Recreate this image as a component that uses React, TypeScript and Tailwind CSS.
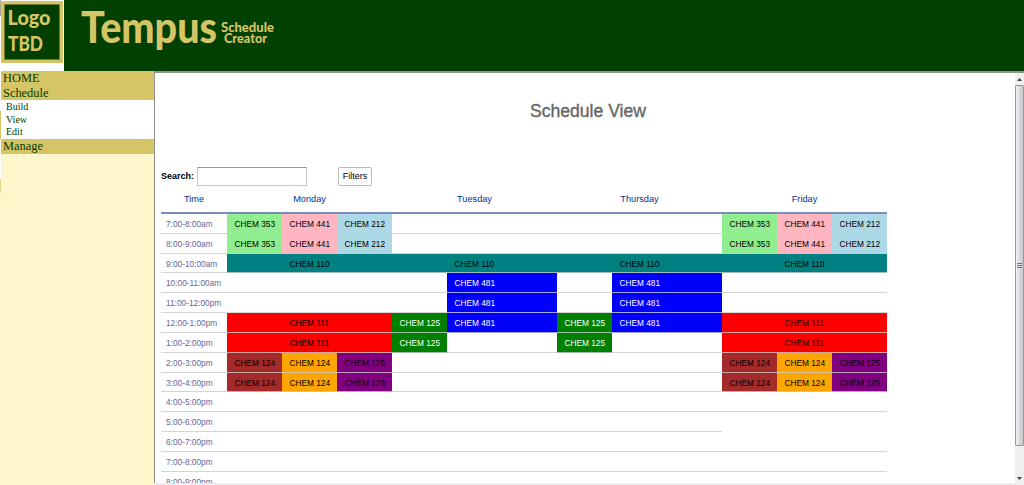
type Cell = { span: number; text?: string; tone?: string; pos?: string; noLine?: boolean };

const GREEN = 'bg-[#90ee90] text-black';
const PINK = 'bg-[#ffb6c1] text-black';
const LIGHT = 'bg-[#add8e6] text-black';
const TEAL = 'bg-[#008080] text-black';
const BLUE = 'bg-[#0000ff] text-white';
const FOREST = 'bg-[#008000] text-white';
const RED = 'bg-[#ff0000] text-black';
const BROWN = 'bg-[#a52a2a] text-black';
const ORANGE = 'bg-[#ffa500] text-black';
const PURPLE = 'bg-[#800080] text-black';

const spanClass: Record<number, string> = {
  1: 'col-span-1',
  2: 'col-span-2',
  3: 'col-span-3',
  6: 'col-span-6',
  9: 'col-span-9',
  12: 'col-span-12',
};

const trio: Cell[] = [
  { span: 1, text: 'CHEM 353', tone: GREEN },
  { span: 1, text: 'CHEM 441', tone: PINK },
  { span: 1, text: 'CHEM 212', tone: LIGHT },
];
const lateTrio: Cell[] = [
  { span: 1, text: 'CHEM 124', tone: BROWN },
  { span: 1, text: 'CHEM 124', tone: ORANGE },
  { span: 1, text: 'CHEM 125', tone: PURPLE },
];
const c111: Cell = { span: 3, text: 'CHEM 111', tone: RED, pos: 'pl-[62.5px]' };
const c110: Cell = { span: 3, text: 'CHEM 110', tone: TEAL, pos: 'pl-[62.5px]' };
const c481: Cell = { span: 2, text: 'CHEM 481', tone: BLUE };
const c125: Cell = { span: 1, text: 'CHEM 125', tone: FOREST };

const morning: Cell[] = [{ span: 3 }, { span: 1 }, c481, { span: 1 }, c481, { span: 3 }];

const rows: { time: string; h: string; cells: Cell[] }[] = [
  { time: '7:00-8:00am', h: 'h-5', cells: [...trio, { span: 6 }, ...trio] },
  { time: '8:00-9:00am', h: 'h-5', cells: [...trio, { span: 6 }, ...trio] },
  { time: '9:00-10:00am', h: 'h-[19px]', cells: [c110, c110, c110, c110] },
  { time: '10:00-11:00am', h: 'h-5', cells: morning },
  { time: '11:00-12:00pm', h: 'h-5', cells: morning },
  { time: '12:00-1:00pm', h: 'h-5', cells: [c111, c125, c481, c125, c481, c111] },
  { time: '1:00-2:00pm', h: 'h-5', cells: [c111, c125, { span: 2 }, c125, { span: 2 }, c111] },
  { time: '2:00-3:00pm', h: 'h-5', cells: [...lateTrio, { span: 6 }, ...lateTrio] },
  { time: '3:00-4:00pm', h: 'h-[19px]', cells: [...lateTrio, { span: 6 }, ...lateTrio] },
  { time: '4:00-5:00pm', h: 'h-5', cells: [{ span: 12 }] },
  { time: '5:00-6:00pm', h: 'h-5', cells: [{ span: 9 }, { span: 3, noLine: true }] },
  { time: '6:00-7:00pm', h: 'h-5', cells: [{ span: 12 }] },
  { time: '7:00-8:00pm', h: 'h-5', cells: [{ span: 12 }] },
  { time: '8:00-9:00pm', h: 'h-5', cells: [{ span: 12 }] },
];

function Header() {
  return (
    <header className="flex h-[71px] shrink-0">
      <div className="h-full w-16 bg-white">
        <svg width="64" height="71" fontFamily="Lato, sans-serif" fontWeight="900" fill="#d6c566">
          <rect x="0" y="0" width="1" height="16" fill="#aaa89a" />
          <rect x="1" y="1" width="62" height="62" />
          <rect x="4" y="4" width="56" height="56" fill="#6f7c2c" />
          <rect x="5" y="5" width="54" height="54" fill="#003f00" />
          <text x="7.5" y="25" fontSize="21.5" textLength="43" lengthAdjust="spacingAndGlyphs">Logo</text>
          <text x="8" y="51" fontSize="21.5" textLength="35" lengthAdjust="spacingAndGlyphs">TBD</text>
        </svg>
      </div>
      <div className="h-full flex-1 bg-[#004000]">
        <svg width="300" height="71" fontFamily="Lato, sans-serif" fontWeight="900" fill="#d6c566">
          <text x="17" y="43" fontSize="44" textLength="136" lengthAdjust="spacingAndGlyphs">Tempus</text>
          <g fontSize="13">
            <text x="157" y="32" textLength="53" lengthAdjust="spacingAndGlyphs">Schedule</text>
            <text x="160" y="43" textLength="43" lengthAdjust="spacingAndGlyphs">Creator</text>
          </g>
        </svg>
      </div>
    </header>
  );
}

function Sidebar() {
  const heading = 'bg-[#d6c566] pl-0.5 text-[12.4px]';
  return (
    <nav className="flex w-[154px] shrink-0 bg-[#fff6cc] font-['Liberation_Serif',serif] text-[#004000]">
      <div className="flex w-px flex-col">
        <div className="h-10 bg-white" />
        <div className="h-7 bg-[#d6c566]" />
        <div className="h-10 bg-white" />
        <div className="h-[14px] bg-[#e0d38a]" />
      </div>
      <div className="flex-1">
        <div className={`${heading} h-[15px] leading-[15px]`}>HOME</div>
        <div className={`${heading} h-[14px] leading-[14px]`}>Schedule</div>
        <ul className="h-[39px] bg-white pt-px pl-[5px] text-[10px] leading-[12.7px]">
          <li>Build</li>
          <li>View</li>
          <li>Edit</li>
        </ul>
        <div className={`${heading} h-[15px] leading-[14px]`}>Manage</div>
      </div>
    </nav>
  );
}

function Timetable() {
  return (
    <div className="w-[726px]">
      <div className="grid h-[27px] grid-cols-[66px_repeat(4,165px)] border-b-2 border-[#7a8cba] text-center text-[9.2px] leading-6 text-[#003399]">
        <div>Time</div>
        <div>Monday</div>
        <div>Tuesday</div>
        <div>Thursday</div>
        <div>Friday</div>
      </div>
      {rows.map((row) => (
        <div key={row.time} className={`grid grid-cols-[66px_repeat(12,55px)] text-[8.3px] leading-5 whitespace-nowrap ${row.h}`}>
          <div className="overflow-hidden border-b border-[#d4d4d4] pl-[5px] text-[#666699]">{row.time}</div>
          {row.cells.map((cell, i) => (
            <div
              key={i}
              className={`overflow-hidden ${cell.noLine ? '' : 'border-b border-[#cccccc]/80'} ${spanClass[cell.span]} ${cell.tone ?? ''} ${cell.pos ?? 'pl-[7.5px]'}`}
            >
              {cell.text}
            </div>
          ))}
        </div>
      ))}
    </div>
  );
}

function ScrollBar() {
  return (
    <div className="flex w-[9px] shrink-0 flex-col items-center bg-[#efefef]">
      <svg width="9" height="12">
        <path d="M2 8 L4.5 5 L7 8 Z" fill="#444" />
      </svg>
      <div className="flex h-[361px] w-full items-center justify-center rounded-[1px] border border-[#999] bg-linear-to-r from-[#f2f2f2] to-[#c6c6cc]">
        <svg width="5" height="6" stroke="#777">
          <path d="M0 .5H5M0 2.5H5M0 4.5H5" />
        </svg>
      </div>
      <div className="flex-1" />
      <svg width="9" height="9">
        <path d="M2 3 L7 3 L4.5 6 Z" fill="#444" />
      </svg>
    </div>
  );
}

export default function App() {
  return (
    <div className="flex h-[485px] w-[1024px] flex-col overflow-hidden bg-white font-['Liberation_Sans',Arial,sans-serif]">
      <Header />
      <div className="flex min-h-0 flex-1">
        <Sidebar />
        <div className="flex min-w-0 flex-1 flex-col">
          <div className="flex min-h-0 flex-1 border-t-2 border-l border-t-[#8b958b] border-l-[#909090]">
            <main className="min-w-0 flex-1 overflow-hidden pl-1.5">
              <h1 className="h-[93px] pt-[26px] text-center text-[17.6px] leading-6 text-[#666] [-webkit-text-stroke:0.35px_#666]">
                Schedule View
              </h1>
              <div className="flex h-[21px] items-center text-[9px]">
                <label htmlFor="search" className="w-9 font-bold">Search:</label>
                <input
                  id="search"
                  className="h-[19px] w-[110px] border border-[#c8c8c8] border-t-[#999] bg-white"
                />
                <button className="ml-[31px] h-[19px] w-[34px] rounded-xs border border-[#bbb] bg-white text-[9px] leading-none">
                  Filters
                </button>
              </div>
              <Timetable />
            </main>
            <ScrollBar />
          </div>
          <div className="h-0.5 bg-[#ededed]" />
        </div>
      </div>
    </div>
  );
}
